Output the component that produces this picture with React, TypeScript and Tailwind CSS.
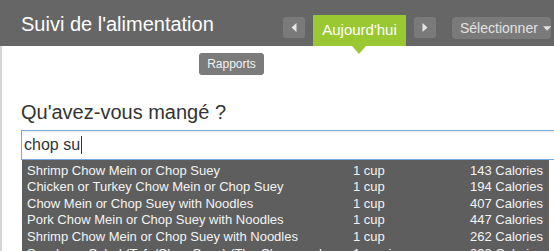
import React from 'react';

const foods = [
  { name: 'Shrimp Chow Mein or Chop Suey', size: '1 cup', cal: '143 Calories' },
  { name: 'Chicken or Turkey Chow Mein or Chop Suey', size: '1 cup', cal: '194 Calories' },
  { name: 'Chow Mein or Chop Suey with Noodles', size: '1 cup', cal: '407 Calories' },
  { name: 'Pork Chow Mein or Chop Suey with Noodles', size: '1 cup', cal: '447 Calories' },
  { name: 'Shrimp Chow Mein or Chop Suey with Noodles', size: '1 cup', cal: '262 Calories' },
  { name: 'Szechuan Salad (Tofu/Chop Suey) (The Cheesecake...', size: '1 serving', cal: '293 Calories' },
];

function Arrow({ dir }: { dir: 'left' | 'right' }) {
  return (
    <button className="w-[22px] h-[21px] rounded-[3px] bg-[#7a7a7a] flex items-center justify-center">
      <svg width="6" height="9" viewBox="0 0 6 9">
        {dir === 'left' ? (
          <polygon points="5.5,0 5.5,9 0.5,4.5" fill="#e6e6e6" />
        ) : (
          <polygon points="0.5,0 0.5,9 5.5,4.5" fill="#e6e6e6" />
        )}
      </svg>
    </button>
  );
}

export default function App() {
  return (
    <div
      className="w-[554px] h-[251px] overflow-hidden bg-white relative"
      style={{ fontFamily: '"Liberation Sans", Arial, sans-serif' }}
    >
      {/* header */}
      <div className="h-[46px] bg-[#666666] flex items-start">
        <div className="w-[283px] pl-[21px] pt-[12px] text-[20px] leading-[24px] text-white">
          Suivi de l'alimentation
        </div>
        <div className="pt-[17px]">
          <Arrow dir="left" />
        </div>
        <div className="ml-[8px] mt-[15px] relative w-[93px] h-[31px] bg-[#9ac832] flex items-center justify-center text-[15px] text-white">
          Aujourd'hui
          <div className="absolute left-[39px] top-[31px] w-0 h-0 border-l-[7px] border-r-[7px] border-t-[8px] border-l-transparent border-r-transparent border-t-[#9ac832]" />
        </div>
        <div className="ml-[8px] pt-[17px]">
          <Arrow dir="right" />
        </div>
        <div className="ml-[16px] mt-[17px] w-[99px] h-[22px] rounded-[4px] bg-[#7a7a7a] flex items-center pl-[8px] gap-[5px] text-[14px] text-[#e2e2e2]">
          Sélectionner
          <svg width="9" height="5" viewBox="0 0 9 5">
            <polygon points="0,0 9,0 4.5,5" fill="#e2e2e2" />
          </svg>
        </div>
      </div>

      {/* body */}
      <div className="border-l-2 border-[#d6d6d6] h-[205px]">
        <div className="pt-[7px] pl-[197px]">
          <button className="w-[65px] h-[22px] rounded-[3px] bg-[#7b7b7b] text-[12px] text-[#f2f2f2] flex items-center justify-center">
            Rapports
          </button>
        </div>
        <div className="pl-[19px] mt-[25px] text-[20px] leading-[24px] text-[#333333]">
          Qu'avez-vous mangé ?
        </div>
        <div className="ml-[19px] mt-[6px] w-[560px] h-[30px] border border-[#7ba7e1] shadow-[inset_0_2px_2px_rgba(0,0,0,0.06)] flex items-center pl-[2px] text-[16px] text-[#333333]">
          chop su
          <span className="inline-block w-px h-[18px] bg-[#333333] ml-px" />
        </div>
        <div className="ml-[20px] w-[527px] pt-[2px] bg-[#5e5e5e] text-[13px] text-[#f4f4f4]">
          {foods.map((f) => (
            <div key={f.name} className="h-[16.6px] flex items-center pl-[5px] pr-[6px] whitespace-nowrap">
              <div className="w-[326px] overflow-hidden">{f.name}</div>
              <div className="w-[100px]">{f.size}</div>
              <div className="flex-1 text-right">{f.cal}</div>
            </div>
          ))}
        </div>
      </div>
    </div>
  );
}
